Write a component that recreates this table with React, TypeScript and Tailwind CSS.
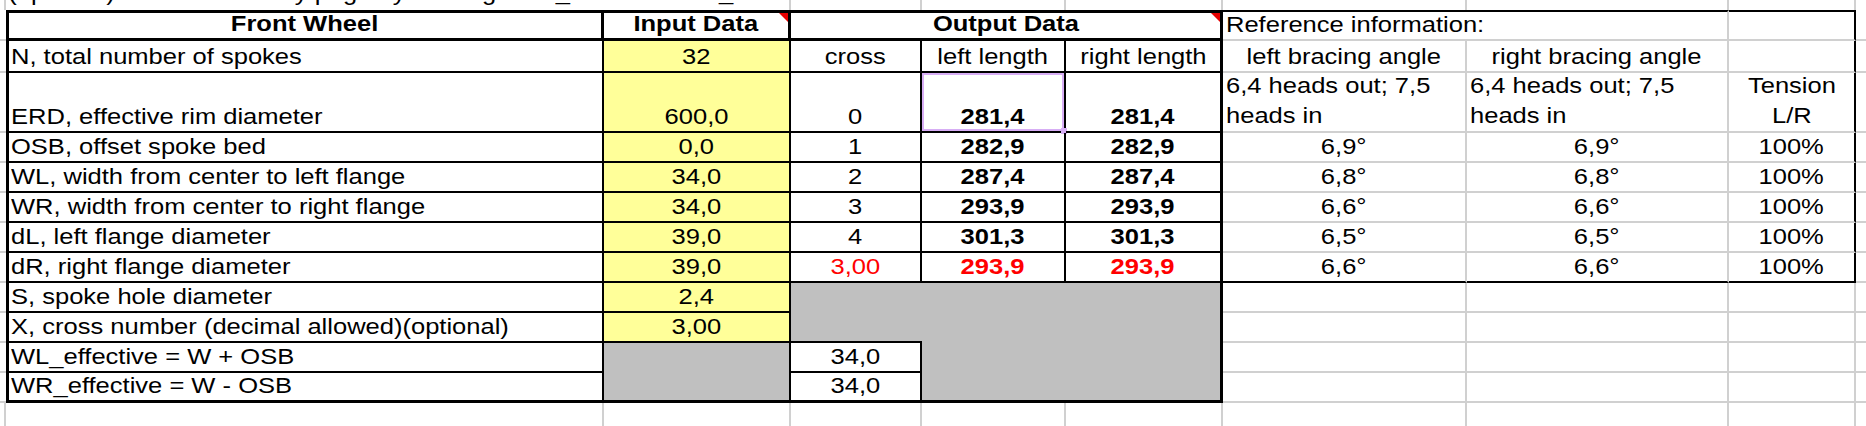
import React from "react";

const grayB = "border-b-2 border-b-[#d0d0d0]";
const grayR = "border-r-2 border-r-[#d0d0d0]";
const blackB = "border-b-2 border-b-black";
const blackR = "border-r-2 border-r-black";
const yellow = "bg-[#ffff99]";
const grey = "bg-[#c0c0c0]";
const label = "justify-start pl-[2px] pb-[2px]";
const mid = "justify-center pb-[2px]";

function Txt({
    children,
    align = "center",
    bold = false,
    red = false,
}: {
    children: React.ReactNode;
    align?: "left" | "center";
    bold?: boolean;
    red?: boolean;
}) {
    return (
        <span
            className={`block whitespace-nowrap scale-x-[1.16] ${
                align === "left" ? "origin-left" : "origin-center text-center"
            } ${bold ? "font-bold" : ""} ${red ? "text-[#ff0000]" : ""}`}
        >
            {children}
        </span>
    );
}

function Cell({
    className = "",
    children,
}: {
    className?: string;
    children?: React.ReactNode;
}) {
    return (
        <div className={`relative flex items-end ${className}`}>{children}</div>
    );
}

function Comment() {
    return (
        <div className="absolute right-0 top-0 h-0 w-0 border-l-[9px] border-t-[9px] border-l-transparent border-t-[#e60000]" />
    );
}

const rows = [
    { label: "OSB, offset spoke bed", input: "0,0", cross: "1", len: "282,9", angle: "6,9°" },
    { label: "WL, width from center to left flange", input: "34,0", cross: "2", len: "287,4", angle: "6,8°" },
    { label: "WR, width from center to right flange", input: "34,0", cross: "3", len: "293,9", angle: "6,6°" },
    { label: "dL, left flange diameter", input: "39,0", cross: "4", len: "301,3", angle: "6,5°" },
    { label: "dR, right flange diameter", input: "39,0", cross: "3,00", len: "293,9", angle: "6,6°", red: true },
];

function RefRow() {
    // empty cells to the right of the main table
    return (
        <>
            <Cell className={`${grayB} ${grayR}`} />
            <Cell className={`${grayB} ${grayR}`} />
            <Cell className={`${grayB} ${grayR}`} />
            <Cell className={grayB} />
        </>
    );
}

export default function App() {
    return (
        <div className="grid h-[426px] w-[1866px] grid-cols-[6px_598px_187px_131px_144px_157px_244px_262px_127px_10px] grid-rows-[10px_31px_32px_60px_30px_30px_30px_30px_30px_30px_30px_30px_30px_23px] overflow-hidden bg-white font-['Liberation_Sans',Arial,sans-serif] text-[22px] leading-[24px] text-black">
            {/* row above the table, mostly cut off */}
            <Cell className={grayR} />
            <div className={`col-span-2 overflow-hidden ${grayR}`}>
                <span className="mt-[-19px] block origin-left scale-x-[1.16] whitespace-nowrap pl-[2px]">
                    (optional) Print a summary page by clicking Print_Front or Print_Rear
                </span>
            </div>
            <Cell className={grayR} />
            <Cell className={grayR} />
            <Cell className={grayR} />
            <Cell className={grayR} />
            <Cell className={grayR} />
            <Cell className={grayR} />
            <Cell />

            {/* header */}
            <Cell className={grayB} />
            <Cell className={`border-3 border-black ${mid}`}>
                <Txt bold>Front Wheel</Txt>
            </Cell>
            <Cell className={`border-t-3 border-r-3 border-b-3 border-black ${mid}`}>
                <Txt bold>Input Data</Txt>
                <Comment />
            </Cell>
            <Cell className={`col-span-3 border-t-3 border-r-3 border-b-3 border-black ${mid}`}>
                <Txt bold>Output Data</Txt>
                <Comment />
            </Cell>
            <Cell className={`border-t-2 border-t-black ${grayB} justify-start pl-[3px] pb-[2px]`}>
                <Txt align="left">Reference information:</Txt>
            </Cell>
            <Cell className={`border-t-2 border-t-black ${grayB} ${grayR}`} />
            <Cell className={`border-t-2 border-t-black ${grayB} ${blackR}`} />
            <Cell className={grayB} />

            {/* N */}
            <Cell className={grayB} />
            <Cell className={`border-l-3 border-l-black ${blackB} ${blackR} ${label}`}>
                <Txt align="left">N, total number of spokes</Txt>
            </Cell>
            <Cell className={`${yellow} ${blackB} ${blackR} ${mid}`}>
                <Txt>32</Txt>
            </Cell>
            <Cell className={`${blackB} ${blackR} ${mid}`}>
                <Txt>cross</Txt>
            </Cell>
            <Cell className={`${blackB} ${blackR} ${mid}`}>
                <Txt>left length</Txt>
            </Cell>
            <Cell className={`${blackB} border-r-3 border-r-black ${mid}`}>
                <Txt>right length</Txt>
            </Cell>
            <Cell className={`${grayB} ${grayR} ${mid}`}>
                <Txt>left bracing angle</Txt>
            </Cell>
            <Cell className={`${grayB} ${grayR} ${mid}`}>
                <Txt>right bracing angle</Txt>
            </Cell>
            <Cell className={`${grayB} ${blackR}`} />
            <Cell className={grayB} />

            {/* ERD */}
            <Cell className={grayB} />
            <Cell className={`border-l-3 border-l-black ${blackB} ${blackR} ${label}`}>
                <Txt align="left">ERD, effective rim diameter</Txt>
            </Cell>
            <Cell className={`${yellow} ${blackB} ${blackR} ${mid}`}>
                <Txt>600,0</Txt>
            </Cell>
            <Cell className={`${blackB} ${blackR} ${mid}`}>
                <Txt>0</Txt>
            </Cell>
            <Cell className={`${blackB} ${blackR} ${mid}`}>
                <Txt bold>281,4</Txt>
                <div className="absolute inset-0 border-2 border-[#d7aef5]" />
                <div className="absolute -right-[3px] -bottom-[3px] h-[6px] w-[6px] bg-[#d7aef5]" />
            </Cell>
            <Cell className={`${blackB} border-r-3 border-r-black ${mid}`}>
                <Txt bold>281,4</Txt>
            </Cell>
            <Cell className={`${grayB} ${grayR} justify-start pl-[3px] leading-[30px]`}>
                <Txt align="left">
                    6,4 heads out; 7,5
                    <br />
                    heads in
                </Txt>
            </Cell>
            <Cell className={`${grayB} ${grayR} justify-start pl-[3px] leading-[30px]`}>
                <Txt align="left">
                    6,4 heads out; 7,5
                    <br />
                    heads in
                </Txt>
            </Cell>
            <Cell className={`${grayB} ${blackR} justify-center leading-[30px]`}>
                <Txt>
                    Tension
                    <br />
                    L/R
                </Txt>
            </Cell>
            <Cell className={grayB} />

            {/* cross rows */}
            {rows.map((r) => (
                <React.Fragment key={r.label}>
                    <Cell className={grayB} />
                    <Cell className={`border-l-3 border-l-black ${blackB} ${blackR} ${label}`}>
                        <Txt align="left">{r.label}</Txt>
                    </Cell>
                    <Cell className={`${yellow} ${blackB} ${blackR} ${mid}`}>
                        <Txt>{r.input}</Txt>
                    </Cell>
                    <Cell className={`${blackB} ${blackR} ${mid}`}>
                        <Txt red={r.red}>{r.cross}</Txt>
                    </Cell>
                    <Cell className={`${blackB} ${blackR} ${mid}`}>
                        <Txt bold red={r.red}>
                            {r.len}
                        </Txt>
                    </Cell>
                    <Cell className={`${blackB} border-r-3 border-r-black ${mid}`}>
                        <Txt bold red={r.red}>
                            {r.len}
                        </Txt>
                    </Cell>
                    <Cell className={`${r.red ? blackB : grayB} ${grayR} ${mid}`}>
                        <Txt>{r.angle}</Txt>
                    </Cell>
                    <Cell className={`${r.red ? blackB : grayB} ${grayR} ${mid}`}>
                        <Txt>{r.angle}</Txt>
                    </Cell>
                    <Cell className={`${r.red ? blackB : grayB} ${blackR} ${mid}`}>
                        <Txt>100%</Txt>
                    </Cell>
                    <Cell className={grayB} />
                </React.Fragment>
            ))}

            {/* S */}
            <Cell className={grayB} />
            <Cell className={`border-l-3 border-l-black ${blackB} ${blackR} ${label}`}>
                <Txt align="left">S, spoke hole diameter</Txt>
            </Cell>
            <Cell className={`${yellow} ${blackB} ${blackR} ${mid}`}>
                <Txt>2,4</Txt>
            </Cell>
            <Cell className={`row-span-2 ${grey} ${blackB}`} />
            <Cell className={`col-span-2 row-span-4 ${grey} border-r-3 border-b-3 border-black`} />
            <RefRow />

            {/* X */}
            <Cell className={grayB} />
            <Cell className={`border-l-3 border-l-black ${blackB} ${blackR} ${label}`}>
                <Txt align="left">X, cross number (decimal allowed)(optional)</Txt>
            </Cell>
            <Cell className={`${yellow} ${blackB} ${blackR} ${mid}`}>
                <Txt>3,00</Txt>
            </Cell>
            <RefRow />

            {/* WL_effective */}
            <Cell className={grayB} />
            <Cell className={`border-l-3 border-l-black ${blackB} ${blackR} ${label}`}>
                <Txt align="left">WL_effective = W + OSB</Txt>
            </Cell>
            <Cell className={`row-span-2 ${grey} border-b-3 border-b-black ${blackR}`} />
            <Cell className={`${blackB} ${blackR} ${mid}`}>
                <Txt>34,0</Txt>
            </Cell>
            <RefRow />

            {/* WR_effective */}
            <Cell className={grayB} />
            <Cell className={`border-l-3 border-l-black border-b-3 border-b-black ${blackR} ${label}`}>
                <Txt align="left">WR_effective = W - OSB</Txt>
            </Cell>
            <Cell className={`border-b-3 border-b-black ${blackR} ${mid}`}>
                <Txt>34,0</Txt>
            </Cell>
            <RefRow />

            {/* below the table */}
            <Cell className={grayR} />
            <Cell className={grayR} />
            <Cell className={grayR} />
            <Cell className={grayR} />
            <Cell className={grayR} />
            <Cell className={grayR} />
            <Cell className={grayR} />
            <Cell className={grayR} />
            <Cell className={grayR} />
            <Cell />
        </div>
    );
}
